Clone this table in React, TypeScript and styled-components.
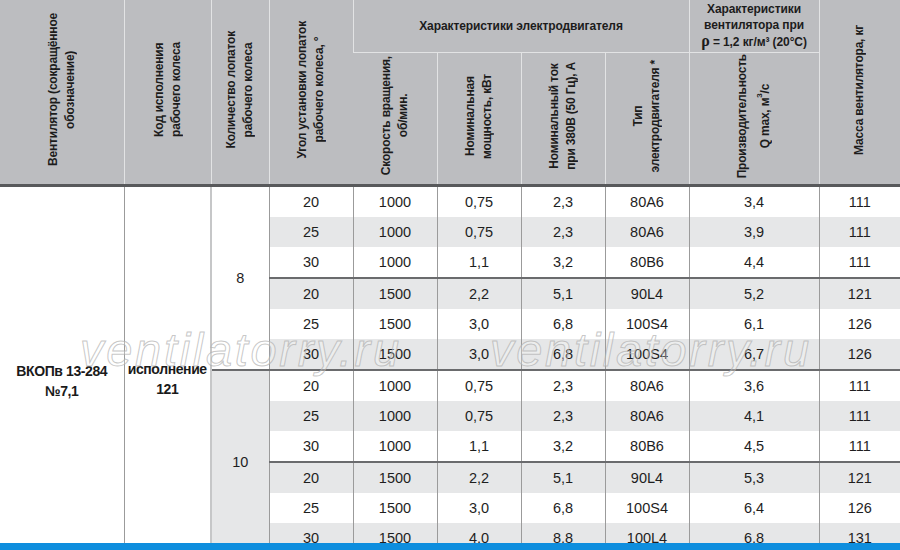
import React from "react";
import styled, { createGlobalStyle } from "styled-components";

const Global = createGlobalStyle`
  html, body { margin: 0; padding: 0; background: #ffffff; }
  body { font-family: "Liberation Sans", Arial, sans-serif; }
`;

const Page = styled.div`
  position: relative;
  width: 900px;
  height: 550px;
  overflow: hidden;
  background: #ffffff;
`;

const Table = styled.table`
  width: 900px;
  border-collapse: collapse;
  table-layout: fixed;
  font-family: "Liberation Sans", Arial, sans-serif;
`;

const THead = styled.thead`
  border-bottom: 3px solid #58595b;
`;

const HeadRow = styled.tr<{ $h: number }>`
  height: ${(p) => p.$h}px;
`;

const Th = styled.th`
  background: #bcbdc0;
  color: #1c1c1c;
  font-weight: 700;
  font-size: 12px;
  line-height: 16px;
  letter-spacing: -0.1px;
  text-align: center;
  vertical-align: middle;
  padding: 0;
  overflow: hidden;
  border-left: 1px solid #e2e3e4;
  border-bottom: 1px solid #e2e3e4;
  &:first-child { border-left: none; }
`;

const VText = styled.div`
  display: inline-block;
  writing-mode: vertical-rl;
  transform: rotate(180deg);
  white-space: nowrap;
  line-height: 17px;
  letter-spacing: -0.2px;
  text-align: center;
`;

const Rho = styled.span`
  font-size: 16px;
  font-family: "Liberation Serif", serif;
  font-weight: 700;
`;

const Sup = styled.sup`
  font-size: 8px;
`;

const BodyRow = styled.tr<{ $alt: boolean }>`
  height: 30px;
  background: ${(p) => (p.$alt ? "#e6e7e8" : "#ffffff")};
`;

const Td = styled.td<{ $sep?: boolean }>`
  padding: 0;
  height: 30px;
  text-align: center;
  vertical-align: middle;
  font-size: 14.5px;
  color: #1e1e1e;
  border-left: 1px solid #9b9b9b;
  border-top: ${(p) => (p.$sep ? "2px solid #6a6b6d" : "none")};
`;

const NameCell = styled.td<{ $offset: number }>`
  padding: ${(p) => p.$offset}px 0 0 0;
  text-align: center;
  vertical-align: middle;
  background: #ffffff;
  font-weight: 700;
  font-size: 14px;
  line-height: 20px;
  letter-spacing: -0.4px;
  color: #1a1a1a;
  white-space: nowrap;
  border-left: 1px solid #9b9b9b;
  &:first-child { border-left: none; }
`;

const CountCell = styled.td<{ $alt: boolean; $sep: boolean }>`
  padding: 0;
  text-align: center;
  vertical-align: middle;
  background: ${(p) => (p.$alt ? "#e6e7e8" : "#ffffff")};
  font-size: 14.5px;
  color: #1e1e1e;
  border-left: 2px solid #c6c7c8;
  border-top: ${(p) => (p.$sep ? "2px solid #6a6b6d" : "none")};
`;

const Watermark = styled.div<{ $left: number }>`
  position: absolute;
  top: 326px;
  left: ${(p) => p.$left}px;
  font-family: "Liberation Sans", Arial, sans-serif;
  font-style: italic;
  font-weight: 400;
  font-size: 47px;
  line-height: 47px;
  letter-spacing: 2.7px;
  color: rgba(255, 255, 255, 0.25);
  -webkit-text-stroke: 1px rgba(175, 175, 175, 0.7);
  pointer-events: none;
  white-space: nowrap;
`;

const BottomBar = styled.div`
  position: absolute;
  left: 0;
  right: 0;
  bottom: 0;
  height: 7px;
  background: #0e8ede;
`;

type Row = [string, string, string, string, string, string, string];

const rows: Row[] = [
  ["20", "1000", "0,75", "2,3", "80A6", "3,4", "111"],
  ["25", "1000", "0,75", "2,3", "80A6", "3,9", "111"],
  ["30", "1000", "1,1", "3,2", "80B6", "4,4", "111"],
  ["20", "1500", "2,2", "5,1", "90L4", "5,2", "121"],
  ["25", "1500", "3,0", "6,8", "100S4", "6,1", "126"],
  ["30", "1500", "3,0", "6,8", "100S4", "6,7", "126"],
  ["20", "1000", "0,75", "2,3", "80A6", "3,6", "111"],
  ["25", "1000", "0,75", "2,3", "80A6", "4,1", "111"],
  ["30", "1000", "1,1", "3,2", "80B6", "4,5", "111"],
  ["20", "1500", "2,2", "5,1", "90L4", "5,3", "121"],
  ["25", "1500", "3,0", "6,8", "100S4", "6,4", "126"],
  ["30", "1500", "4,0", "8,8", "100L4", "6,8", "131"],
];

const widths = [124, 87, 58, 84, 84, 84, 84, 84, 130, 81];

export default function App() {
  return (
    <Page>
      <Global />
      <Table>
        <colgroup>
          {widths.map((w, i) => (
            <col key={i} style={{ width: w }} />
          ))}
        </colgroup>
        <THead>
          <HeadRow $h={52}>
            <Th rowSpan={2}>
              <VText>
                Вентилятор (сокращённое
                <br />
                обозначение)
              </VText>
            </Th>
            <Th rowSpan={2}>
              <VText>
                Код исполнения
                <br />
                рабочего колеса
              </VText>
            </Th>
            <Th rowSpan={2}>
              <VText>
                Количество лопаток
                <br />
                рабочего колеса
              </VText>
            </Th>
            <Th rowSpan={2}>
              <VText>
                Угол установки лопаток
                <br />
                рабочего колеса, °
              </VText>
            </Th>
            <Th colSpan={4}>Характеристики электродвигателя</Th>
            <Th>
              Характеристики
              <br />
              вентилятора при
              <br />
              <Rho>ρ</Rho> = 1,2 кг/м³ (20°C)
            </Th>
            <Th rowSpan={2}>
              <VText>Масса вентилятора, кг</VText>
            </Th>
          </HeadRow>
          <HeadRow $h={133}>
            <Th>
              <VText>
                Скорость вращения,
                <br />
                об/мин.
              </VText>
            </Th>
            <Th>
              <VText>
                Номинальная
                <br />
                мощность, кВт
              </VText>
            </Th>
            <Th>
              <VText>
                Номинальный ток
                <br />
                при 380В (50 Гц), А
              </VText>
            </Th>
            <Th>
              <VText>
                Тип
                <br />
                электродвигателя *
              </VText>
            </Th>
            <Th>
              <VText>
                Производительность
                <br />
                Q max, м<Sup>3</Sup>/с
              </VText>
            </Th>
          </HeadRow>
        </THead>
        <tbody>
          {rows.map((r, i) => {
            const alt = i % 2 === 1;
            const sep = i === 3 || i === 6 || i === 9;
            return (
              <BodyRow key={i} $alt={alt}>
                {i === 0 && (
                  <NameCell rowSpan={12} $offset={22}>
                    ВКОПв 13-284
                    <br />
                    №7,1
                  </NameCell>
                )}
                {i === 0 && (
                  <NameCell rowSpan={12} $offset={18}>
                    исполнение
                    <br />
                    121
                  </NameCell>
                )}
                {(i === 0 || i === 6) && (
                  <CountCell rowSpan={6} $alt={i === 6} $sep={i === 6}>
                    {i === 0 ? "8" : "10"}
                  </CountCell>
                )}
                {r.map((v, j) => (
                  <Td key={j} $sep={sep}>
                    {v}
                  </Td>
                ))}
              </BodyRow>
            );
          })}
        </tbody>
      </Table>
      <Watermark $left={80}>ventilatorry.ru</Watermark>
      <Watermark $left={490}>ventilatorry.ru</Watermark>
      <BottomBar />
    </Page>
  );
}
